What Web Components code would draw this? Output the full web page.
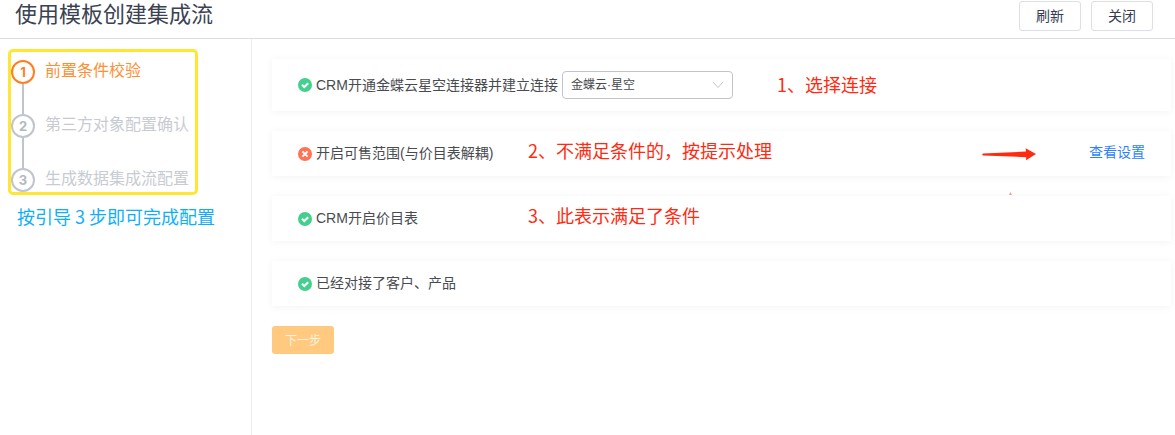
<!DOCTYPE html>
<html lang="zh-CN">
<head>
<meta charset="utf-8">
<title>使用模板创建集成流</title>
<style>
    body {
        margin: 0;
        font-family: "Liberation Sans", "Noto Sans CJK SC", sans-serif;
        font-size: 14px;
        color: #484b50;
        background: #fff;
    }
</style>
</head>
<body>
<flow-wizard></flow-wizard>

<script>
customElements.define("plain-button", class extends HTMLElement {
    constructor() {
        super()
        let shadowRoot = this.attachShadow({mode: "open"})
        shadowRoot.innerHTML = `
        <style>
            :host {
                display: block;
            }

            button {
                display: block;
                box-sizing: border-box;
                width: 62px;
                height: 30px;
                padding: 0 0 2px;
                border: 1px solid #dcdfe6;
                border-radius: 3px;
                background: #fff;
                color: #363b52;
                font: inherit;
                cursor: pointer;
            }

            :host([primary]) button {
                height: 28px;
                border: 0;
                background: #ffca80;
                color: #fff3e0;
                font-size: 12px;
            }
        </style>
        <button type="button"><slot></slot></button>
        `
        shadowRoot.querySelector("button").disabled = this.hasAttribute("primary")
    }
});

customElements.define("page-header", class extends HTMLElement {
    constructor() {
        super()
        let shadowRoot = this.attachShadow({mode: "open"})
        shadowRoot.innerHTML = `
        <style>
            :host {
                display: flex;
                align-items: flex-start;
                justify-content: space-between;
                padding: 1px 22px 7px 15px;
                border-bottom: 1px solid #dadce0;
            }

            h1 {
                margin: 0;
                font-size: 22px;
                font-weight: 400;
                line-height: 28px;
                color: #3b4252;
            }

            .actions {
                display: flex;
                gap: 10px;
            }
        </style>
        <h1><slot></slot></h1>
        <div class="actions"><slot name="actions"></slot></div>
        `
    }
});

customElements.define("step-item", class extends HTMLElement {
    constructor() {
        super()
        let shadowRoot = this.attachShadow({mode: "open"})
        shadowRoot.innerHTML = `
        <style>
            :host {
                display: grid;
                grid-template-columns: 24px 1fr;
                column-gap: 10px;
                color: #c8cbd2;
            }

            :host([active]) {
                color: #ff8f35;
            }

            .number {
                box-sizing: border-box;
                height: 24px;
                border: 2px solid #c0c4cc;
                border-radius: 50%;
                text-align: center;
                font: bold 13px/20px Inter, sans-serif;
                color: #b4b8c2;
            }

            :host([active]) .number {
                border-color: #ff7f1f;
                color: #ff7f1f;
            }

            .label {
                font-size: 16px;
                line-height: 22px;
            }

            .line {
                justify-self: center;
                width: 2px;
                height: 30px;
                background: #c0c4cc;
            }

            :host(:last-of-type) .line {
                display: none;
            }
        </style>
        <div class="number"></div>
        <div class="label"><slot></slot></div>
        <div class="line"></div>
        `
        shadowRoot.querySelector(".number").textContent = this.getAttribute("number")
    }
});

customElements.define("step-list", class extends HTMLElement {
    constructor() {
        super()
        let shadowRoot = this.attachShadow({mode: "open"})
        shadowRoot.innerHTML = `
        <style>
            :host {
                display: block;
                padding: 10px 53px 0 8px;
                border-right: 1px solid #ebedf0;
            }

            .frame {
                padding-top: 8px;
                border: 3px solid #ffe633;
                border-radius: 5px;
            }

            .hint {
                margin: 8px 0 0 9px;
                font: 18px/26px "Noto Sans CJK SC", sans-serif;
                color: #0eaffa;
                white-space: nowrap;
            }
        </style>
        <div class="frame"><slot></slot></div>
        <p class="hint"><slot name="hint"></slot></p>
        `
    }
});

customElements.define("status-icon", class extends HTMLElement {
    constructor() {
        super()
        let ok = this.getAttribute("state") == "ok"
        let shadowRoot = this.attachShadow({mode: "open"})
        shadowRoot.innerHTML = `
        <style>
            :host {
                display: block;
                width: 14px;
                height: 14px;
            }

            svg {
                display: block;
            }
        </style>
        <svg width="14" height="14" viewBox="0 0 14 14" fill="none" stroke="#fff" stroke-width="2">
            <circle cx="7" cy="7" r="7" stroke="none" fill="${ok ? "#45cf8f" : "#ff7354"}"/>
            <path d="${ok ? "M4 6.8L6.3 9L10.2 5.2" : "M4.4 4.4L9.6 9.6M9.6 4.4L4.4 9.6"}"/>
        </svg>
        `
    }
});

customElements.define("connection-select", class extends HTMLElement {
    constructor() {
        super()
        let shadowRoot = this.attachShadow({mode: "open"})
        shadowRoot.innerHTML = `
        <style>
            :host {
                display: grid;
                align-items: center;
            }

            select, svg {
                grid-area: 1 / 1;
            }

            select {
                appearance: none;
                box-sizing: border-box;
                width: 171px;
                height: 28px;
                padding: 0 28px 0 8px;
                border: 1px solid #c0c4cc;
                border-radius: 4px;
                background: #fff;
                color: inherit;
                font: inherit;
                font-size: 12px;
            }

            svg {
                justify-self: end;
                margin-right: 9px;
                pointer-events: none;
            }
        </style>
        <select aria-label="连接">
            <option>金蝶云·星空</option>
        </select>
        <svg width="12" height="8" viewBox="0 0 12 8" fill="none" stroke="#c0c4cc">
            <path d="M1 1L6 6.5L11 1"/>
        </svg>
        `
    }
});

customElements.define("red-arrow", class extends HTMLElement {
    constructor() {
        super()
        let shadowRoot = this.attachShadow({mode: "open"})
        shadowRoot.innerHTML = `
        <style>
            :host {
                display: block;
            }

            svg {
                display: block;
                overflow: visible;
            }
        </style>
        <svg width="54" height="14" viewBox="0 0 54 14" fill="#ff2a10">
            <path d="M1 6.6L44 4.6L43.6 1.2L54 7L44 13.2L44.2 10.2L1 8.4Q-.4 7.5 1 6.6Z"/>
            <path d="M27 48L28.5 45L30 48Z" fill="#ff9a90"/>
        </svg>
        `
    }
});

customElements.define("check-card", class extends HTMLElement {
    constructor() {
        super()
        let shadowRoot = this.attachShadow({mode: "open"})
        shadowRoot.innerHTML = `
        <style>
            :host {
                position: relative;
                display: flex;
                align-items: center;
                gap: 4px;
                padding: 12px 26px;
                background: #fff;
                box-shadow: 0 1px 8px rgba(0, 0, 0, 0.05);
            }

            .label {
                line-height: 21px;
                white-space: nowrap;
            }

            .end {
                display: flex;
                align-items: center;
                gap: 53px;
                height: 21px;
                margin-left: auto;
                line-height: 18px;
            }

            /* handwritten remarks lie on top of the card */
            .note {
                position: absolute;
                left: 256px;
                font: 18px/26px "Noto Sans CJK SC", sans-serif;
                color: #ff2a10;
                padding-bottom: 7px;
                white-space: nowrap;
            }

            :host([wide]) .note {
                left: 505px;
                padding-bottom: 3px;
            }

            ::slotted(a) {
                padding-bottom: 4px;
                color: #2b82ff;
                text-decoration: none;
            }
        </style>
        <status-icon state="${this.getAttribute("state")}"></status-icon>
        <span class="label"><slot></slot></span>
        <slot name="field"></slot>
        <span class="note"><slot name="note"></slot></span>
        <div class="end"><slot name="end"></slot></div>
        `
    }
});

customElements.define("flow-wizard", class extends HTMLElement {
    constructor() {
        super()
        let shadowRoot = this.attachShadow({mode: "open"})
        shadowRoot.innerHTML = `
        <style>
            :host {
                display: flex;
                flex-direction: column;
                min-height: 100vh;
            }

            .body {
                flex: 1;
                display: grid;
                grid-template-columns: 252px 1fr;
            }

            main {
                display: flex;
                flex-direction: column;
                gap: 20px;
                padding: 20px 4px 20px 20px;
            }
        </style>

        <page-header>
            使用模板创建集成流
            <plain-button slot="actions">刷新</plain-button>
            <plain-button slot="actions">关闭</plain-button>
        </page-header>
        <div class="body">
            <step-list>
                <step-item number="1" active>前置条件校验</step-item>
                <step-item number="2">第三方对象配置确认</step-item>
                <step-item number="3">生成数据集成流配置</step-item>
                <span slot="hint">按引导 3 步即可完成配置</span>
            </step-list>
            <main>
                <check-card state="ok" wide>
                    CRM开通金蝶云星空连接器并建立连接
                    <connection-select slot="field"></connection-select>
                    <span slot="note">1、选择连接</span>
                </check-card>
                <check-card state="error">
                    开启可售范围(与价目表解耦)
                    <span slot="note">2、不满足条件的，按提示处理</span>
                    <red-arrow slot="end"></red-arrow>
                    <a slot="end" href="#">查看设置</a>
                </check-card>
                <check-card state="ok">
                    CRM开启价目表
                    <span slot="note">3、此表示满足了条件</span>
                </check-card>
                <check-card state="ok">已经对接了客户、产品</check-card>
                <plain-button primary>下一步</plain-button>
            </main>
        </div>
    </flow-wizard>
        `
    }
});
</script>
</body>
</html>
